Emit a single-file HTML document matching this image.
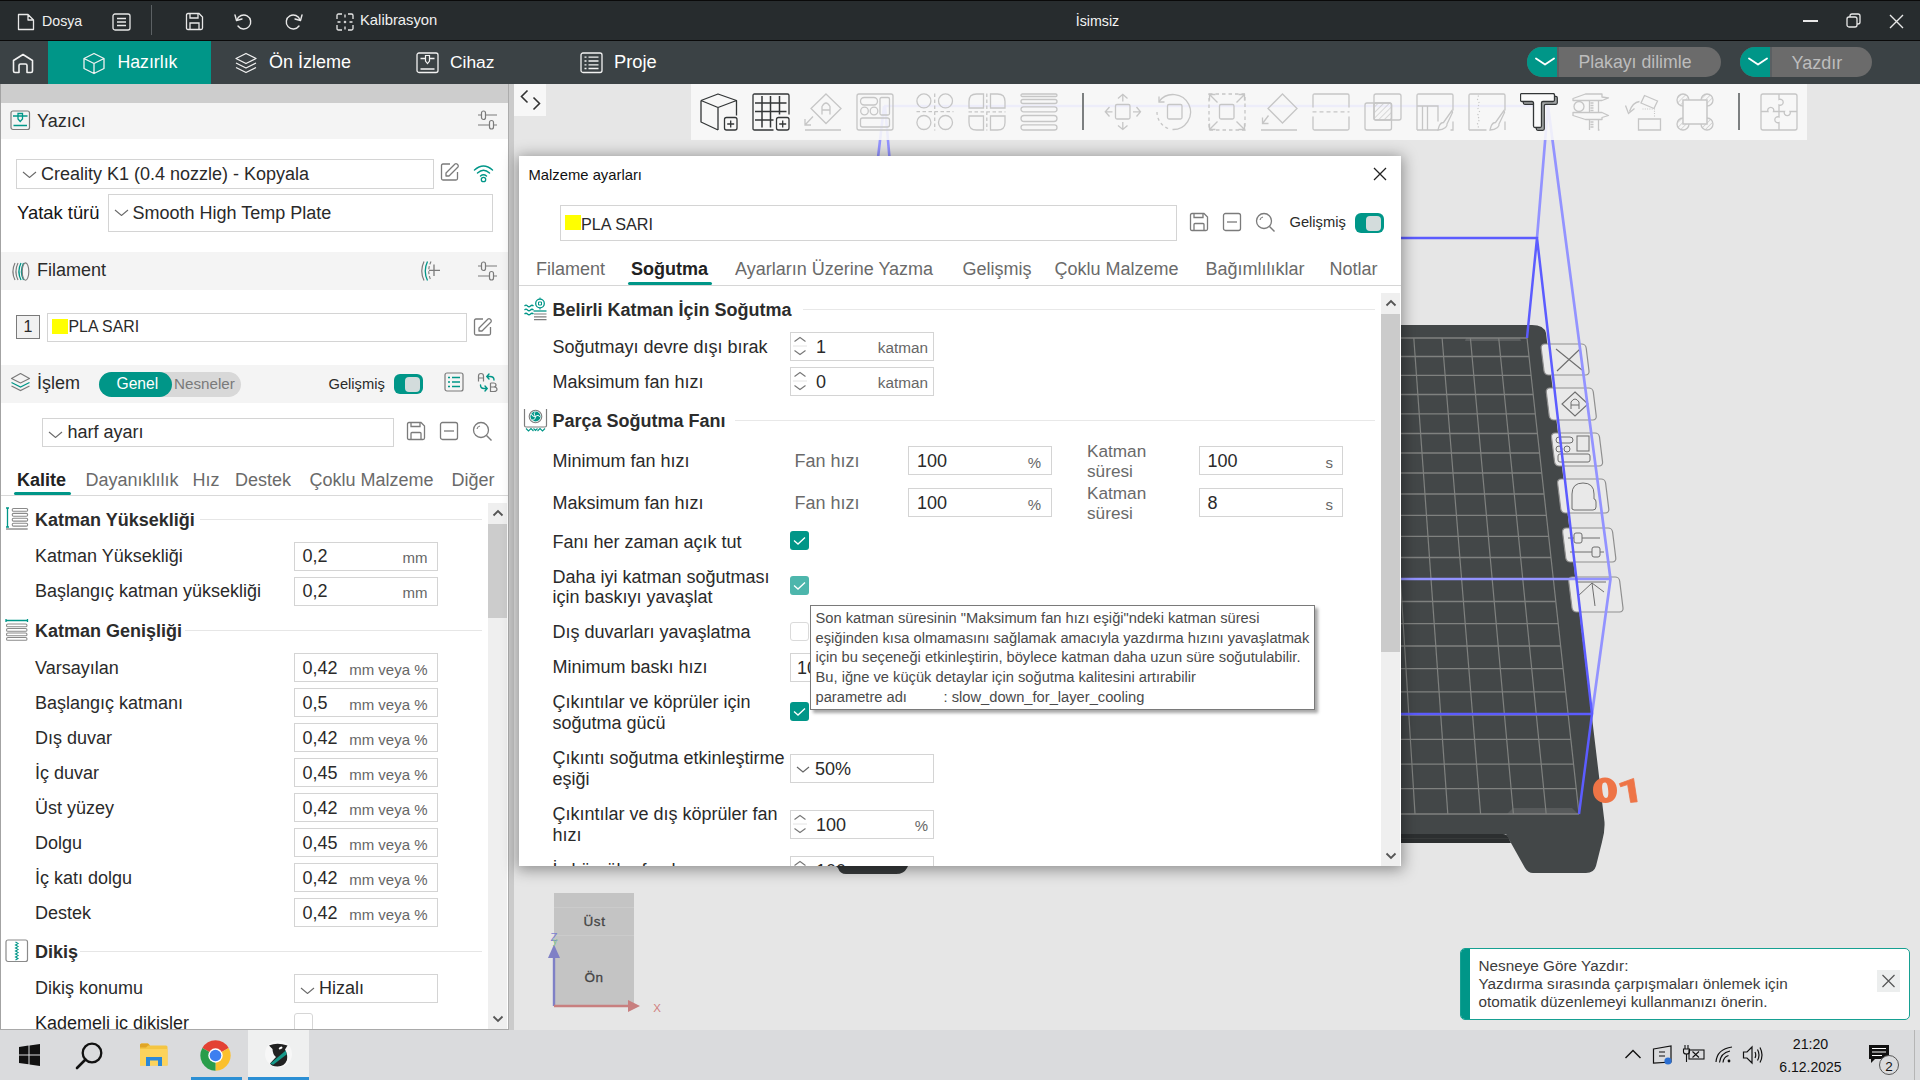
<!DOCTYPE html>
<html><head><meta charset="utf-8"><title>Creality Print</title>
<style>
html,body{margin:0;padding:0;width:1920px;height:1080px;overflow:hidden;background:#e6e6e6;font-family:"Liberation Sans", sans-serif;}
body>div,body>svg{position:absolute;}
.t{position:absolute;line-height:1;white-space:pre;}
</style></head><body>
<div style="left:514px;top:84px;width:1406px;height:946px;background:#e6e6e6;"></div>
<svg style="left:0px;top:0px;" width="1920" height="1080" viewBox="0 0 1920 1080" fill="none"><path d="M1100 325 H1532 Q1544 325 1546 333 L1604.5 822 Q1605 832 1602 842 L1596 866 Q1594 873 1586 873 H1533 Q1528 873 1525 868 L1506 834 H1100 Z" fill="#434748"/><path d="M1100 834 H1503 Q1507 834 1508 837 L1511 843 H1100 Z" fill="#2c2f30"/><path d="M1100 838.5 H1509" stroke="#3a3d3e" stroke-width="0.8"/><path d="M1507 814 L1513 808 H1572 L1578 814 Z" fill="#575a5b"/><path d="M1466 338 H1520 L1521 341 H1465 Z" fill="#5a5d5e"/><path d="M1100 338 H1527.0" stroke="#7f817f" stroke-width="1.3"/><path d="M1100 356.5 H1529.0" stroke="#7f817f" stroke-width="1.3"/><path d="M1100 375.3 H1531.1" stroke="#7f817f" stroke-width="1.3"/><path d="M1100 394.5 H1533.2" stroke="#7f817f" stroke-width="1.3"/><path d="M1100 413.8 H1535.3" stroke="#7f817f" stroke-width="1.3"/><path d="M1100 433.5 H1537.4" stroke="#7f817f" stroke-width="1.3"/><path d="M1100 453 H1539.6" stroke="#7f817f" stroke-width="1.3"/><path d="M1100 473 H1541.7" stroke="#7f817f" stroke-width="1.3"/><path d="M1100 494 H1544.0" stroke="#7f817f" stroke-width="1.3"/><path d="M1100 515.4 H1546.4" stroke="#7f817f" stroke-width="1.3"/><path d="M1100 536.3 H1548.7" stroke="#7f817f" stroke-width="1.3"/><path d="M1100 557.5 H1551.0" stroke="#7f817f" stroke-width="1.3"/><path d="M1100 579.3 H1553.4" stroke="#7f817f" stroke-width="1.3"/><path d="M1100 601.5 H1555.8" stroke="#7f817f" stroke-width="1.3"/><path d="M1100 623.7 H1558.2" stroke="#7f817f" stroke-width="1.3"/><path d="M1100 646 H1560.6" stroke="#7f817f" stroke-width="1.3"/><path d="M1100 668.7 H1563.1" stroke="#7f817f" stroke-width="1.3"/><path d="M1100 691.8 H1565.7" stroke="#7f817f" stroke-width="1.3"/><path d="M1100 715 H1568.2" stroke="#7f817f" stroke-width="1.3"/><path d="M1100 739.3 H1570.8" stroke="#7f817f" stroke-width="1.3"/><path d="M1100 764.1 H1573.5" stroke="#7f817f" stroke-width="1.3"/><path d="M1100 788.7 H1576.2" stroke="#7f817f" stroke-width="1.3"/><path d="M1100 814 H1579.0" stroke="#7f817f" stroke-width="1.3"/><path d="M1527.0 338 L1579.0 814" stroke="#7f817f" stroke-width="1.2"/><path d="M1498.7 338 L1546.2 814" stroke="#7f817f" stroke-width="1.2"/><path d="M1470.4 338 L1513.4 814" stroke="#7f817f" stroke-width="1.2"/><path d="M1442.1 338 L1480.6 814" stroke="#7f817f" stroke-width="1.2"/><path d="M1413.8 338 L1447.8 814" stroke="#7f817f" stroke-width="1.2"/><path d="M1385.5 338 L1415.0 814" stroke="#7f817f" stroke-width="1.2"/><path d="M1357.2 338 L1382.2 814" stroke="#7f817f" stroke-width="1.2"/><g transform="translate(1537,344) skewX(7)" ><rect x="3.7" y="0" width="45" height="31" rx="4" fill="#e9e9e9" stroke="#8f8f8f" stroke-width="1.2"/></g><g transform="translate(1542,388) skewX(7)" ><rect x="3.8" y="0" width="47" height="32" rx="4" fill="#e9e9e9" stroke="#8f8f8f" stroke-width="1.2"/></g><g transform="translate(1547,433) skewX(7)" ><rect x="4.0" y="0" width="48" height="33" rx="4" fill="#e9e9e9" stroke="#8f8f8f" stroke-width="1.2"/></g><g transform="translate(1553,479) skewX(7)" ><rect x="4.1" y="0" width="48" height="34" rx="4" fill="#e9e9e9" stroke="#8f8f8f" stroke-width="1.2"/></g><g transform="translate(1558,528) skewX(7)" ><rect x="4.1" y="0" width="50" height="34" rx="4" fill="#e9e9e9" stroke="#8f8f8f" stroke-width="1.2"/></g><g transform="translate(1564,577) skewX(7)" ><rect x="4.2" y="0" width="51" height="35" rx="4" fill="#e9e9e9" stroke="#8f8f8f" stroke-width="1.2"/></g><path d="M1556 349 L1582 370 M1580 349 L1557 371" stroke="#6e6e6e" stroke-width="1.1"/><path d="M1575 392 L1588 404 L1575 416 L1562 404 Z" stroke="#6e6e6e" stroke-width="1.1" fill="none"/><path d="M1571 409 V402 Q1575 396 1579 402 V409 M1571 405 H1579" stroke="#6e6e6e" stroke-width="1"/><rect x="1556" y="437" width="17" height="6" rx="3" stroke="#6e6e6e" stroke-width="1" fill="none"/><circle cx="1559" cy="449" r="3" stroke="#6e6e6e" stroke-width="1" fill="none"/><circle cx="1567" cy="449" r="3" stroke="#6e6e6e" stroke-width="1" fill="none"/><rect x="1577" y="436" width="12" height="15" stroke="#6e6e6e" stroke-width="1" fill="none"/><rect x="1558" y="454" width="32" height="8" rx="2" stroke="#6e6e6e" stroke-width="1" fill="none"/><path d="M1572 509 V494 Q1572 483 1583 483 Q1594 483 1594 494 V499 Q1596 499 1596 502 V507 Q1596 510 1593 510 H1574 Z" stroke="#6e6e6e" stroke-width="1" fill="none"/><path d="M1568 538 H1600 M1570 552 H1604" stroke="#6e6e6e" stroke-width="1"/><rect x="1574" y="533" width="8" height="10" rx="2" fill="#e9e9e9" stroke="#6e6e6e" stroke-width="1"/><rect x="1592" y="547" width="8" height="10" rx="2" fill="#e9e9e9" stroke="#6e6e6e" stroke-width="1"/><path d="M1577 582 H1606 M1592 583 L1595 606 M1578 596 L1592 583 L1604 592" stroke="#6e6e6e" stroke-width="1" fill="none"/><path fill-rule="evenodd" fill="#ee7446" d="M1604.8 777.6 C1612 777.4 1617 783 1617 790.5 C1617 798 1612.5 802.9 1605.5 802.9 C1598 802.9 1593 797.5 1593 790 C1593 782.5 1598 777.8 1604.8 777.6 Z M1604.6 782.6 C1602.3 782.8 1601.8 785 1602.3 790 C1602.8 795.5 1604 797.9 1606 797.9 C1608 797.9 1608.6 795.5 1608.2 790.5 C1607.7 785 1606.8 782.4 1604.6 782.6 Z"/><path fill="#ee7446" stroke="#ee7446" stroke-width="0.8" stroke-linejoin="round" d="M1619.4 783.6 L1633.6 778.4 L1637.2 801.8 L1630.6 802.4 L1627.6 784.6 L1620.6 786.8 Z"/><path d="M1548 106 L1610.5 579 L1592 714 M1100 579 H1610.5 M1548 106 L1537 238" stroke="#9393ff" stroke-width="2.7" fill="none"/><path d="M1537 238 L1527 338 M1100 238 H1537 L1592 714 L1579 814 M1100 714 H1592" stroke="#5c5cff" stroke-width="2.5" fill="none"/><path d="M884 106 H1548 M884 106 L876 175 M885 106 L891 175" stroke="#9393ff" stroke-width="2.6" fill="none"/><path d="M830 860 H911 L907 868 Q904 874 896 874 H846 Q840 874 838 868 Z" fill="#383b3c"/></svg>
<div style="left:0px;top:0px;width:1920px;height:40px;background:#272c2e;"></div>
<div style="left:0px;top:0px;width:1920px;height:1px;background:#0a0a0a;"></div>
<div style="left:0px;top:40px;width:1920px;height:1px;background:#0a0a0a;"></div>
<svg style="left:17px;top:13px;" width="18" height="18" viewBox="0 0 18 18" fill="none"><path d="M1.5 1.5 H11 L16.5 7 V16.5 H1.5 Z M11 1.5 V7 H16.5" stroke="#e8e8e8" stroke-width="1.3" stroke-linejoin="round"/></svg>
<svg style="left:112px;top:13px;" width="19" height="18" viewBox="0 0 19 18" fill="none"><rect x="1" y="1" width="17" height="16" rx="2" stroke="#e8e8e8" stroke-width="1.3"/><path d="M5 5.5H14M5 9H14M5 12.5H14" stroke="#e8e8e8" stroke-width="1.3"/></svg>
<div style="left:151px;top:5px;width:1px;height:30px;background:#5c6164;"></div>
<svg style="left:185px;top:12px;" width="19" height="19" viewBox="0 0 19 19" fill="none"><path d="M1.5 3 Q1.5 1.5 3 1.5 H14 L17.5 5 V16 Q17.5 17.5 16 17.5 H3 Q1.5 17.5 1.5 16 Z" stroke="#e8e8e8" stroke-width="1.3"/><path d="M5 1.5 V6 H13 V1.5 M5 17.5 V11 H14 V17.5" stroke="#e8e8e8" stroke-width="1.3"/></svg>
<svg style="left:233px;top:12px;" width="20" height="19" viewBox="0 0 20 19" fill="none"><path d="M4 8 A7 7 0 1 1 5 14" stroke="#e8e8e8" stroke-width="1.4" stroke-linecap="round"/><path d="M2 3 L3.5 8.5 L9 7" stroke="#e8e8e8" stroke-width="1.4" stroke-linecap="round" stroke-linejoin="round"/></svg>
<svg style="left:284px;top:12px;" width="20" height="19" viewBox="0 0 20 19" fill="none"><path d="M16 8 A7 7 0 1 0 15 14" stroke="#e8e8e8" stroke-width="1.4" stroke-linecap="round"/><path d="M18 3 L16.5 8.5 L11 7" stroke="#e8e8e8" stroke-width="1.4" stroke-linecap="round" stroke-linejoin="round"/></svg>
<svg style="left:336px;top:12.5px;" width="19" height="19" viewBox="0 0 19 19" fill="none"><path d="M1 6 V2.5 Q1 1 2.5 1 H6 M12 1 H15.5 Q17 1 17 2.5 V6 M17 12 V15.5 Q17 17 15.5 17 H12 M6 17 H2.5 Q1 17 1 15.5 V12" stroke="#e8e8e8" stroke-width="1.3"/><path d="M9 1.5 V4.5 M9 13.5 V16.5 M1.5 9 H4.5 M13.5 9 H16.5" stroke="#e8e8e8" stroke-width="1.3"/><path d="M9 7.5 L10.5 9 L9 10.5 L7.5 9 Z" fill="#e8e8e8"/></svg>
<div style="left:1803px;top:20px;width:15px;height:1.5px;background:#e8e8e8;"></div>
<svg style="left:1846px;top:13px;" width="15" height="15" viewBox="0 0 15 15" fill="none"><rect x="1" y="4" width="10" height="10" rx="2" stroke="#e8e8e8" stroke-width="1.3"/><path d="M4 4 V3 Q4 1 6 1 H12 Q14 1 14 3 V9 Q14 11 12 11 H11" stroke="#e8e8e8" stroke-width="1.3"/></svg>
<svg style="left:1889px;top:14px;" width="15" height="15" viewBox="0 0 15 15" fill="none"><path d="M1 1 L14 14 M14 1 L1 14" stroke="#e8e8e8" stroke-width="1.4"/></svg>
<div class="t" style="top:13.98px;font-size:14.2px;color:#f0f0f0;left:42px;">Dosya</div>
<div class="t" style="top:13.47px;font-size:14.8px;color:#f0f0f0;left:360px;">Kalibrasyon</div>
<div class="t" style="top:13.98px;font-size:14.2px;color:#f4f4f4;left:1097.5px;transform:translateX(-50%);">İsimsiz</div>
<div style="left:0px;top:41px;width:1920px;height:43px;background:#3b4245;"></div>
<div style="left:48px;top:41px;width:163px;height:43px;background:#009688;"></div>
<svg style="left:11px;top:51px;" width="24" height="24" viewBox="0 0 24 24" fill="none"><path d="M2.5 9.5 L12 3.5 L21.5 9.5 V20 Q21.5 21.5 20 21.5 H16 V14.5 Q16 13 14.5 13 H9.5 Q8 13 8 14.5 V21.5 H4 Q2.5 21.5 2.5 20 Z" stroke="#f2f2f2" stroke-width="1.6" stroke-linejoin="round"/></svg>
<svg style="left:82px;top:52px;" width="24" height="23" viewBox="0 0 24 23" fill="none"><path d="M12 1.5 L22 6.5 V16.5 L12 21.5 L2 16.5 V6.5 Z M2 6.5 L12 11.5 L22 6.5 M12 11.5 V21.5" stroke="#f2f2f2" stroke-width="1.3" stroke-linejoin="round"/></svg>
<svg style="left:234px;top:52px;" width="24" height="23" viewBox="0 0 24 23" fill="none"><path d="M12 1.5 L22 6.5 L12 11.5 L2 6.5 Z" stroke="#f2f2f2" stroke-width="1.3" stroke-linejoin="round"/><path d="M2 11 L12 16 L22 11 M2 15.5 L12 20.5 L22 15.5" stroke="#f2f2f2" stroke-width="1.3" stroke-linejoin="round"/></svg>
<svg style="left:415.5px;top:52px;" width="23" height="22" viewBox="0 0 23 22" fill="none"><rect x="1" y="1" width="21" height="19.5" rx="2" stroke="#f2f2f2" stroke-width="1.3"/><path d="M4.5 6.5 H18.5 M4.5 17 H18.5" stroke="#f2f2f2" stroke-width="1.3"/><path d="M9.5 3.5 H13.5 V9 L11.5 11.5 L9.5 9 Z" stroke="#f2f2f2" stroke-width="1.2" fill="#3b4245"/></svg>
<svg style="left:579.5px;top:52px;" width="23" height="22" viewBox="0 0 23 22" fill="none"><rect x="1" y="1" width="21" height="19.5" rx="2" stroke="#f2f2f2" stroke-width="1.3"/><path d="M4.5 5.2 H6.5 M4.5 9 H6.5 M4.5 12.8 H6.5 M4.5 16.5 H6.5 M8.5 5.2 H18.5 M8.5 9 H18.5 M8.5 12.8 H18.5 M8.5 16.5 H18.5" stroke="#f2f2f2" stroke-width="1.3"/></svg>
<div class="t" style="top:53.62px;font-size:17.7px;color:#ffffff;left:117.5px;">Hazırlık</div>
<div class="t" style="top:53.36px;font-size:18px;color:#ffffff;left:269px;">Ön İzleme</div>
<div class="t" style="top:53.87px;font-size:17.4px;color:#ffffff;left:450px;">Cihaz</div>
<div class="t" style="top:53.11px;font-size:18.3px;color:#ffffff;left:614px;">Proje</div>
<div style="left:1527px;top:47px;width:194px;height:30px;border-radius:15px;background:#6b6b6b;overflow:hidden"><div style="position:absolute;left:0;top:0;width:30px;height:30px;background:#009688"></div></div>
<div style="left:1740px;top:47px;width:132px;height:30px;border-radius:15px;background:#6b6b6b;overflow:hidden"><div style="position:absolute;left:0;top:0;width:30px;height:30px;background:#009688"></div></div>
<div style="left:1557px;top:47px;width:2px;height:30px;background:#5a5f62;"></div>
<div style="left:1770px;top:47px;width:2px;height:30px;background:#5a5f62;"></div>
<svg style="left:1534px;top:56px;" width="22" height="12" viewBox="0 0 22 12" fill="none"><path d="M2 2.5 L11 8.5 L20 2.5" stroke="#ffffff" stroke-width="1.9" stroke-linecap="round" stroke-linejoin="round"/></svg>
<svg style="left:1747px;top:56px;" width="22" height="12" viewBox="0 0 22 12" fill="none"><path d="M2 2.5 L11 8.5 L20 2.5" stroke="#ffffff" stroke-width="1.9" stroke-linecap="round" stroke-linejoin="round"/></svg>
<div class="t" style="top:54.02px;font-size:17.7px;color:#bdbdbd;left:1578.5px;">Plakayı dilimle</div>
<div class="t" style="top:53.76px;font-size:18px;color:#bdbdbd;left:1791.5px;">Yazdır</div>
<div style="left:0px;top:84px;width:508px;height:946px;background:#ffffff;"></div>
<div style="left:0px;top:84px;width:508px;height:19px;background:#cdcdcd;"></div>
<div style="left:1px;top:103px;width:507px;height:36px;background:#f4f4f4;"></div>
<div style="left:1px;top:252px;width:507px;height:38px;background:#f4f4f4;"></div>
<div style="left:1px;top:365px;width:507px;height:38px;background:#f4f4f4;"></div>
<div style="left:0px;top:84px;width:1px;height:946px;background:#a3a3a3;"></div>
<div style="left:508px;top:84px;width:6px;height:946px;background:#cbcbcb;"></div>
<div style="left:508px;top:84px;width:1px;height:946px;background:#acacac;"></div>
<svg style="left:10px;top:110px;" width="21" height="21" viewBox="0 0 21 21" fill="none"><rect x="1" y="1" width="18.5" height="18.5" rx="2" stroke="#7b7b7b" stroke-width="1.2"/><path d="M3 6 H17.5 M3.5 15.5 H17" stroke="#009688" stroke-width="1.4"/><path d="M8 3.5 H12.5 V9 L10.2 11.5 L8 9 Z" stroke="#009688" stroke-width="1.3" fill="none"/></svg>
<svg style="left:477px;top:110px;" width="21" height="21" viewBox="0 0 21 21" fill="none"><path d="M1 5 H20 M1 15 H20" stroke="#7b7b7b" stroke-width="1.2"/><rect x="4.5" y="1" width="4" height="8.5" rx="2" fill="#f4f4f4" stroke="#7b7b7b" stroke-width="1.2"/><rect x="12.5" y="10.5" width="4" height="8.5" rx="2" fill="#f4f4f4" stroke="#7b7b7b" stroke-width="1.2"/></svg>
<svg style="left:477px;top:261px;" width="21" height="21" viewBox="0 0 21 21" fill="none"><path d="M1 5 H20 M1 15 H20" stroke="#7b7b7b" stroke-width="1.2"/><rect x="4.5" y="1" width="4" height="8.5" rx="2" fill="#f4f4f4" stroke="#7b7b7b" stroke-width="1.2"/><rect x="12.5" y="10.5" width="4" height="8.5" rx="2" fill="#f4f4f4" stroke="#7b7b7b" stroke-width="1.2"/></svg>
<svg style="left:440px;top:162px;" width="20" height="20" viewBox="0 0 20 20" fill="none"><path d="M10 2 H3 Q1.5 2 1.5 3.5 V16.5 Q1.5 18 3 18 H16 Q17.5 18 17.5 16.5 V10" stroke="#7b7b7b" stroke-width="1.3"/><path d="M6 14 V11 L15 2 Q16 1.3 17 2 L18 3 Q18.7 4 18 5 L9 14 Z" stroke="#7b7b7b" stroke-width="1.3" stroke-linejoin="round"/></svg>
<svg style="left:473px;top:317px;" width="20" height="20" viewBox="0 0 20 20" fill="none"><path d="M10 2 H3 Q1.5 2 1.5 3.5 V16.5 Q1.5 18 3 18 H16 Q17.5 18 17.5 16.5 V10" stroke="#7b7b7b" stroke-width="1.3"/><path d="M6 14 V11 L15 2 Q16 1.3 17 2 L18 3 Q18.7 4 18 5 L9 14 Z" stroke="#7b7b7b" stroke-width="1.3" stroke-linejoin="round"/></svg>
<svg style="left:473px;top:163px;" width="21" height="20" viewBox="0 0 21 20" fill="none"><path d="M1.5 7 Q10.5 -1 19.5 7 M4.5 10 Q10.5 4.5 16.5 10 M7.5 13 Q10.5 10.5 13.5 13" stroke="#009688" stroke-width="1.4" stroke-linecap="round"/><circle cx="10.5" cy="16.5" r="2.2" stroke="#009688" stroke-width="1.3"/></svg>
<svg style="left:10px;top:261px;" width="21" height="21" viewBox="0 0 21 21" fill="none"><path d="M5 2 Q0.8 10.5 5 19 M8 2 Q3.8 10.5 8 19" stroke="#7b7b7b" stroke-width="1.15"/><path d="M11 2 Q6.8 10.5 11 19" stroke="#009688" stroke-width="1.3"/><path d="M13.5 2 Q9.3 10.5 13.5 19" stroke="#009688" stroke-width="1.2"/><ellipse cx="15.5" cy="10.5" rx="3.3" ry="8.7" stroke="#7b7b7b" stroke-width="1.15"/></svg>
<svg style="left:419px;top:260px;" width="23" height="22" viewBox="0 0 23 22" fill="none"><path d="M5 1.5 Q0.5 11 5 20.5" stroke="#7b7b7b" stroke-width="1.2"/><path d="M8.5 1.5 Q4 11 8.5 20.5" stroke="#009688" stroke-width="1.3"/><path d="M12 1.5 Q7.5 11 12 20.5" stroke="#7b7b7b" stroke-width="1.1" stroke-dasharray="3 2"/><path d="M10 10.3 H21 M15 4.5 V16" stroke="#7b7b7b" stroke-width="1.3"/></svg>
<svg style="left:10px;top:372px;" width="21" height="20" viewBox="0 0 21 20" fill="none"><path d="M10.5 1.5 L19.5 6.5 L10.5 11 L1.5 6.5 Z" stroke="#7b7b7b" stroke-width="1.2" stroke-linejoin="round"/><path d="M1.5 10.5 L10.5 15 L19.5 10.5" stroke="#009688" stroke-width="1.3"/><path d="M1.5 14 L10.5 18.5 L19.5 14" stroke="#7b7b7b" stroke-width="1.2"/></svg>
<svg style="left:444px;top:372px;" width="20" height="20" viewBox="0 0 20 20" fill="none"><rect x="1" y="1" width="18" height="18" rx="2" stroke="#7b7b7b" stroke-width="1.2"/><path d="M4 5.5 H6 M4 10 H6 M4 14.5 H6" stroke="#009688" stroke-width="1.3"/><path d="M8 5.5 H16 M8 10 H16 M8 14.5 H16" stroke="#009688" stroke-width="1.3"/></svg>
<svg style="left:477px;top:372px;" width="21" height="21" viewBox="0 0 21 21" fill="none"><path d="M1.5 9.5 V4 Q1.5 1.5 4 1.5 Q6.5 1.5 6.5 4 V9.5 M1.5 6 H6.5" stroke="#7b7b7b" stroke-width="1.2"/><path d="M13.5 11 V19.5 H17 Q20 19.5 20 17.3 Q20 15 17 15 H13.5 M13.5 15 H16.5 Q19 15 19 13 Q19 11 16.5 11 H13.5" stroke="#7b7b7b" stroke-width="1.2"/><path d="M17 8 Q17 4.5 13 4.5 H10 M12 2 L9.8 4.5 L12 7" stroke="#009688" stroke-width="1.4" stroke-linecap="round"/><path d="M3.5 13 Q3.5 16.5 7 16.5 H10 M8 14 L10.2 16.5 L8 19" stroke="#009688" stroke-width="1.4" stroke-linecap="round"/></svg>
<svg style="left:406px;top:421px;" width="20" height="20" viewBox="0 0 20 20" fill="none"><path d="M1.5 3 Q1.5 1.5 3 1.5 H15 L18.5 5 V17 Q18.5 18.5 17 18.5 H3 Q1.5 18.5 1.5 17 Z" stroke="#7b7b7b" stroke-width="1.3"/><path d="M5 1.5 V5.5 H14 V1.5 M5 18.5 V12.5 Q5 11.5 6 11.5 H14 Q15 11.5 15 12.5 V18.5" stroke="#7b7b7b" stroke-width="1.3"/></svg>
<svg style="left:439px;top:421px;" width="20" height="20" viewBox="0 0 20 20" fill="none"><rect x="1.5" y="1.5" width="17" height="17" rx="2" stroke="#7b7b7b" stroke-width="1.3"/><path d="M5 10 H15" stroke="#7b7b7b" stroke-width="1.3"/></svg>
<svg style="left:472px;top:421px;" width="21" height="21" viewBox="0 0 21 21" fill="none"><circle cx="9" cy="9" r="7.5" stroke="#7b7b7b" stroke-width="1.3"/><path d="M14.5 14.5 L19.5 19.5" stroke="#7b7b7b" stroke-width="1.4"/><path d="M5 8 Q5.5 5.5 8 5" stroke="#7b7b7b" stroke-width="1.1"/></svg>
<div class="t" style="top:111.96px;font-size:18px;color:#2a2a2a;left:37px;">Yazıcı</div>
<div style="left:16px;top:159px;width:418px;height:30px;border:1px solid #d4d4d4;background:#fff;box-sizing:border-box;"></div>
<svg style="left:22px;top:170.5px;" width="15" height="7.5" viewBox="0 0 15 7.5" fill="none"><path d="M1 1 L7.5 6.5 L14 1" stroke="#6a6a6a" stroke-width="1.1"/></svg>
<div class="t" style="top:164.56px;font-size:18px;color:#2a2a2a;left:41px;">Creality K1 (0.4 nozzle) - Kopyala</div>
<div class="t" style="top:203.72px;font-size:18.4px;color:#151515;left:17px;">Yatak türü</div>
<div style="left:108px;top:194px;width:385px;height:38px;border:1px solid #d4d4d4;background:#fff;box-sizing:border-box;"></div>
<svg style="left:114px;top:208.5px;" width="15" height="7.5" viewBox="0 0 15 7.5" fill="none"><path d="M1 1 L7.5 6.5 L14 1" stroke="#6a6a6a" stroke-width="1.1"/></svg>
<div class="t" style="top:203.76px;font-size:18px;color:#2a2a2a;left:132.5px;">Smooth High Temp Plate</div>
<div class="t" style="top:261.46px;font-size:18px;color:#2a2a2a;left:37px;">Filament</div>
<div style="left:16px;top:315px;width:24px;height:24px;border:1px solid #7a7a7a;background:#f1f1f1;box-sizing:border-box;"></div>
<div class="t" style="top:318.96px;font-size:16px;color:#2a2a2a;left:28px;transform:translateX(-50%);">1</div>
<div style="left:47px;top:313px;width:420px;height:29px;border:1px solid #d4d4d4;background:#fff;box-sizing:border-box;"></div>
<div style="left:52px;top:319px;width:16px;height:15px;background:#ffff00;"></div>
<div class="t" style="top:319.14px;font-size:15.9px;color:#2a2a2a;left:68.5px;">PLA SARI</div>
<div class="t" style="top:374.36px;font-size:18px;color:#2a2a2a;left:37px;">İşlem</div>
<div style="left:99px;top:372px;width:142px;height:25px;border-radius:12.5px;background:#d8d8d8"></div>
<div style="left:99px;top:372px;width:73px;height:25px;border-radius:12.5px;background:#009688"></div>
<div class="t" style="top:376.09px;font-size:15.6px;color:#ffffff;left:116.5px;">Genel</div>
<div class="t" style="top:376.43px;font-size:15.2px;color:#7a7a7a;left:174px;">Nesneler</div>
<div class="t" style="top:377.06px;font-size:14.7px;color:#2a2a2a;left:328.5px;">Gelişmiş</div>
<div style="left:394px;top:374px;width:29px;height:20px;border-radius:6px;background:#009688"></div>
<div style="left:405px;top:376.5px;width:15px;height:15px;border-radius:4px;background:#d3dcdc"></div>
<div style="left:42px;top:418px;width:352px;height:29px;border:1px solid #d4d4d4;background:#fff;box-sizing:border-box;"></div>
<svg style="left:48px;top:430.5px;" width="15" height="7.5" viewBox="0 0 15 7.5" fill="none"><path d="M1 1 L7.5 6.5 L14 1" stroke="#6a6a6a" stroke-width="1.1"/></svg>
<div class="t" style="top:423.26px;font-size:18px;color:#2a2a2a;left:67.5px;">harf ayarı</div>
<div class="t" style="top:470.76px;font-size:18px;color:#222;font-weight:700;left:17px;">Kalite</div>
<div class="t" style="top:470.76px;font-size:18px;color:#6a6a6a;left:85.5px;">Dayanıklılık</div>
<div class="t" style="top:470.76px;font-size:18px;color:#6a6a6a;left:192.5px;">Hız</div>
<div class="t" style="top:470.76px;font-size:18px;color:#6a6a6a;left:235px;">Destek</div>
<div class="t" style="top:470.76px;font-size:18px;color:#6a6a6a;left:309.5px;">Çoklu Malzeme</div>
<div class="t" style="top:470.76px;font-size:18px;color:#6a6a6a;left:451.5px;">Diğer</div>
<div style="left:14px;top:492px;width:57px;height:3px;border-radius:2px;background:#009688"></div>
<div style="left:1px;top:495px;width:507px;height:1px;background:#d9d9d9;"></div>
<div style="left:488px;top:503px;width:19px;height:527px;background:#efefef;"></div>
<div style="left:488px;top:524px;width:19px;height:94px;background:#cccccc;"></div>
<svg style="left:492px;top:509px;" width="12" height="8" viewBox="0 0 12 8" fill="none"><path d="M1.5 6.5 L6 2 L10.5 6.5" stroke="#555" stroke-width="1.8"/></svg>
<svg style="left:492px;top:1015px;" width="12" height="8" viewBox="0 0 12 8" fill="none"><path d="M1.5 1.5 L6 6 L10.5 1.5" stroke="#555" stroke-width="1.8"/></svg>
<div class="t" style="top:510.76px;font-size:18px;color:#2c2c2c;font-weight:700;left:35px;">Katman Yüksekliği</div>
<div style="left:200px;top:519px;width:282px;height:1px;background:#e6e6e6;"></div>
<div class="t" style="top:547.46px;font-size:18px;color:#2a2a2a;left:35px;">Katman Yüksekliği</div>
<div style="left:294px;top:542px;width:144px;height:29px;border:1px solid #d4d4d4;background:#fff;box-sizing:border-box;"></div>
<div class="t" style="top:547.46px;font-size:18px;color:#2a2a2a;left:302.5px;">0,2</div>
<div class="t" style="top:550.00px;font-size:15px;color:#666;right:1492.5px;">mm</div>
<div class="t" style="top:582.46px;font-size:18px;color:#2a2a2a;left:35px;">Başlangıç katman yüksekliği</div>
<div style="left:294px;top:577px;width:144px;height:29px;border:1px solid #d4d4d4;background:#fff;box-sizing:border-box;"></div>
<div class="t" style="top:582.46px;font-size:18px;color:#2a2a2a;left:302.5px;">0,2</div>
<div class="t" style="top:585.00px;font-size:15px;color:#666;right:1492.5px;">mm</div>
<div class="t" style="top:621.86px;font-size:18px;color:#2c2c2c;font-weight:700;left:35px;">Katman Genişliği</div>
<div style="left:185px;top:630.1px;width:297px;height:1px;background:#e6e6e6;"></div>
<div class="t" style="top:658.96px;font-size:18px;color:#2a2a2a;left:35px;">Varsayılan</div>
<div style="left:294px;top:653px;width:144px;height:29px;border:1px solid #d4d4d4;background:#fff;box-sizing:border-box;"></div>
<div class="t" style="top:658.96px;font-size:18px;color:#2a2a2a;left:302.5px;">0,42</div>
<div class="t" style="top:661.50px;font-size:15px;color:#666;right:1492.5px;">mm veya %</div>
<div class="t" style="top:693.96px;font-size:18px;color:#2a2a2a;left:35px;">Başlangıç katmanı</div>
<div style="left:294px;top:688px;width:144px;height:29px;border:1px solid #d4d4d4;background:#fff;box-sizing:border-box;"></div>
<div class="t" style="top:693.96px;font-size:18px;color:#2a2a2a;left:302.5px;">0,5</div>
<div class="t" style="top:696.50px;font-size:15px;color:#666;right:1492.5px;">mm veya %</div>
<div class="t" style="top:728.96px;font-size:18px;color:#2a2a2a;left:35px;">Dış duvar</div>
<div style="left:294px;top:723px;width:144px;height:29px;border:1px solid #d4d4d4;background:#fff;box-sizing:border-box;"></div>
<div class="t" style="top:728.96px;font-size:18px;color:#2a2a2a;left:302.5px;">0,42</div>
<div class="t" style="top:731.50px;font-size:15px;color:#666;right:1492.5px;">mm veya %</div>
<div class="t" style="top:763.96px;font-size:18px;color:#2a2a2a;left:35px;">İç duvar</div>
<div style="left:294px;top:758px;width:144px;height:29px;border:1px solid #d4d4d4;background:#fff;box-sizing:border-box;"></div>
<div class="t" style="top:763.96px;font-size:18px;color:#2a2a2a;left:302.5px;">0,45</div>
<div class="t" style="top:766.50px;font-size:15px;color:#666;right:1492.5px;">mm veya %</div>
<div class="t" style="top:798.96px;font-size:18px;color:#2a2a2a;left:35px;">Üst yüzey</div>
<div style="left:294px;top:793px;width:144px;height:29px;border:1px solid #d4d4d4;background:#fff;box-sizing:border-box;"></div>
<div class="t" style="top:798.96px;font-size:18px;color:#2a2a2a;left:302.5px;">0,42</div>
<div class="t" style="top:801.50px;font-size:15px;color:#666;right:1492.5px;">mm veya %</div>
<div class="t" style="top:833.96px;font-size:18px;color:#2a2a2a;left:35px;">Dolgu</div>
<div style="left:294px;top:828px;width:144px;height:29px;border:1px solid #d4d4d4;background:#fff;box-sizing:border-box;"></div>
<div class="t" style="top:833.96px;font-size:18px;color:#2a2a2a;left:302.5px;">0,45</div>
<div class="t" style="top:836.50px;font-size:15px;color:#666;right:1492.5px;">mm veya %</div>
<div class="t" style="top:868.96px;font-size:18px;color:#2a2a2a;left:35px;">İç katı dolgu</div>
<div style="left:294px;top:863px;width:144px;height:29px;border:1px solid #d4d4d4;background:#fff;box-sizing:border-box;"></div>
<div class="t" style="top:868.96px;font-size:18px;color:#2a2a2a;left:302.5px;">0,42</div>
<div class="t" style="top:871.50px;font-size:15px;color:#666;right:1492.5px;">mm veya %</div>
<div class="t" style="top:903.96px;font-size:18px;color:#2a2a2a;left:35px;">Destek</div>
<div style="left:294px;top:898px;width:144px;height:29px;border:1px solid #d4d4d4;background:#fff;box-sizing:border-box;"></div>
<div class="t" style="top:903.96px;font-size:18px;color:#2a2a2a;left:302.5px;">0,42</div>
<div class="t" style="top:906.50px;font-size:15px;color:#666;right:1492.5px;">mm veya %</div>
<div class="t" style="top:942.76px;font-size:18px;color:#2c2c2c;font-weight:700;left:35px;">Dikiş</div>
<div style="left:80px;top:951px;width:402px;height:1px;background:#e6e6e6;"></div>
<div class="t" style="top:979.36px;font-size:18px;color:#2a2a2a;left:35px;">Dikiş konumu</div>
<div style="left:294px;top:974px;width:144px;height:29px;border:1px solid #d4d4d4;background:#fff;box-sizing:border-box;"></div>
<svg style="left:300px;top:986.5px;" width="15" height="7.5" viewBox="0 0 15 7.5" fill="none"><path d="M1 1 L7.5 6.5 L14 1" stroke="#6a6a6a" stroke-width="1.1"/></svg>
<div class="t" style="top:979.36px;font-size:18px;color:#2a2a2a;left:319px;">Hizalı</div>
<div style="left:0;top:1003px;width:488px;height:27px;overflow:hidden;position:absolute"><div class="t" style="left:35px;top:11.4px;font-size:18px;color:#1e1e1e">Kademeli iç dikişler</div><div style="position:absolute;left:294px;top:10px;width:19px;height:19px;border:1px solid #d6d6d6;border-radius:3px;box-sizing:border-box"></div></div>
<svg style="left:5px;top:507px;" width="24" height="24" viewBox="0 0 24 24" fill="none"><rect x="7.2" y="1.5" width="15.5" height="2.8" rx="1.4" stroke="#8a8a8a" stroke-width="1.1"/><rect x="7.2" y="6.4" width="15.5" height="2.8" rx="1.4" stroke="#8a8a8a" stroke-width="1.1"/><rect x="7.2" y="11.3" width="15.5" height="2.8" rx="1.4" stroke="#8a8a8a" stroke-width="1.1"/><rect x="7.2" y="16.3" width="15.5" height="2.8" rx="1.4" stroke="#8a8a8a" stroke-width="1.1"/><path d="M1 22 H22.7" stroke="#8a8a8a" stroke-width="1.4"/><path d="M2.5 1 V20 M1 1 H4 M1 20 H4" stroke="#009688" stroke-width="1.3"/></svg>
<svg style="left:5px;top:619px;" width="24" height="23" viewBox="0 0 24 23" fill="none"><path d="M1 1.5 H22.5 M1 0 V3 M22.5 0 V3" stroke="#009688" stroke-width="1.3"/><rect x="1.5" y="5" width="20.5" height="2.8" rx="1.4" stroke="#8a8a8a" stroke-width="1.1"/><rect x="1.5" y="9.5" width="20.5" height="2.8" rx="1.4" stroke="#8a8a8a" stroke-width="1.1"/><rect x="1.5" y="14" width="20.5" height="2.8" rx="1.4" stroke="#8a8a8a" stroke-width="1.1"/><rect x="1.5" y="18.5" width="20.5" height="2.8" rx="1.4" stroke="#8a8a8a" stroke-width="1.1"/></svg>
<svg style="left:5px;top:939px;" width="24" height="24" viewBox="0 0 24 24" fill="none"><rect x="1" y="1" width="21.5" height="21.5" rx="2" stroke="#8a8a8a" stroke-width="1.2"/><path d="M10.5 3 L13 4.5 L10.5 6 L13 7.5 L10.5 9 L13 10.5 L10.5 12 L13 13.5 L10.5 15 L13 16.5 L10.5 18 L13 19.5 L10.5 21" stroke="#009688" stroke-width="1.1"/></svg>
<div style="left:514px;top:84px;width:32px;height:32px;background:#f7f7f7;"></div>
<svg style="left:520px;top:89px;" width="21" height="22" viewBox="0 0 21 22" fill="none"><path d="M7.5 1.5 L1.5 7.5 L7.5 13.5 M13.5 8.5 L19.5 14.5 L13.5 20.5" stroke="#333" stroke-width="1.6"/></svg>
<div style="left:691px;top:84px;width:1116px;height:56px;background:rgba(249,249,249,0.88)"></div>
<svg style="left:700px;top:93px;" width="38" height="38" viewBox="-0.5 -0.5 38 38" fill="none"><path d="M0.5 7 L17.5 0.5 L36 7 V22 M0.5 7 V28.5 L17.5 36.5 M0.5 7 L17.5 14 L36 7 M17.5 14 V36.5" stroke="#333637" stroke-width="1.3" stroke-linejoin="round"/><rect x="24" y="24" width="12.5" height="12.5" rx="2" fill="#f8f8f8" stroke="#333637" stroke-width="1.3"/><path d="M30.2 27 V34 M26.7 30.5 H33.7" stroke="#333637" stroke-width="1.3"/></svg>
<svg style="left:752px;top:93px;" width="38" height="38" viewBox="-0.5 -0.5 38 38" fill="none"><path d="M21 36.5 H2 Q0.5 36.5 0.5 35 V2 Q0.5 0.5 2 0.5 H35 Q36.5 0.5 36.5 2 V21" stroke="#333637" stroke-width="1.3"/><path d="M2.5 9.5 H34 M2.5 18 H34 M2.5 26.5 H21 M9.5 2.5 V34 M18 2.5 V34 M27 2.5 V21" stroke="#333637" stroke-width="1.5"/><rect x="24" y="24" width="12.5" height="12.5" rx="2" fill="#f8f8f8" stroke="#333637" stroke-width="1.3"/><path d="M30.2 27 V34 M26.7 30.5 H33.7" stroke="#333637" stroke-width="1.3"/></svg>
<svg style="left:804px;top:93px;" width="38" height="38" viewBox="-0.5 -0.5 38 38" fill="none"><path d="M21.5 0.5 L36.5 15 L21.5 30 L6.5 15 Z" stroke="#c6c6c6" stroke-width="1.3"/><path d="M17.5 21 V13 Q21.5 6 25.5 13 V21 M17.5 16.5 H25.5" stroke="#c6c6c6" stroke-width="1.3"/><path d="M8.5 23 L0.5 31.5 M0.5 25.5 V31.5 H6.5" stroke="#c6c6c6" stroke-width="1.3"/><path d="M0.5 36.5 H36.5" stroke="#c6c6c6" stroke-width="1.3"/></svg>
<svg style="left:856px;top:93px;" width="38" height="38" viewBox="-0.5 -0.5 38 38" fill="none"><rect x="0.5" y="0.5" width="36" height="36" rx="2" stroke="#c6c6c6" stroke-width="1.3"/><rect x="4" y="4" width="17" height="7.5" rx="3.7" stroke="#c6c6c6" stroke-width="1.3"/><circle cx="8" cy="17.5" r="3.8" stroke="#c6c6c6" stroke-width="1.3"/><circle cx="17.5" cy="17.5" r="3.8" stroke="#c6c6c6" stroke-width="1.3"/><rect x="23.5" y="4" width="9.5" height="17.5" rx="1.5" stroke="#c6c6c6" stroke-width="1.3"/><rect x="4" y="24.5" width="29" height="9" rx="2" stroke="#c6c6c6" stroke-width="1.3"/></svg>
<svg style="left:916px;top:93px;" width="38" height="38" viewBox="-0.5 -0.5 38 38" fill="none"><circle cx="7.4" cy="7.4" r="7" stroke="#c6c6c6" stroke-width="1.3"/><circle cx="29" cy="7.4" r="7" stroke="#c6c6c6" stroke-width="1.3"/><circle cx="7.4" cy="29" r="7" stroke="#c6c6c6" stroke-width="1.3"/><circle cx="29" cy="29" r="7" stroke="#c6c6c6" stroke-width="1.3"/><path d="M18.2 0 V37 M0 18.2 H37" stroke="#c6c6c6" stroke-width="1.3" stroke-dasharray="3.5 2.5"/></svg>
<svg style="left:968px;top:93px;" width="38" height="38" viewBox="-0.5 -0.5 38 38" fill="none"><g><path d="M15 0.5 H8 Q0.5 0.5 0.5 8 V14.5 H15 Z" stroke="#c6c6c6" stroke-width="1.3"/></g><g transform="translate(37 0) scale(-1 1)"><path d="M15 0.5 H8 Q0.5 0.5 0.5 8 V14.5 H15 Z" stroke="#c6c6c6" stroke-width="1.3"/></g><g transform="translate(0 37) scale(1 -1)"><path d="M15 0.5 H8 Q0.5 0.5 0.5 8 V14.5 H15 Z" stroke="#c6c6c6" stroke-width="1.3"/></g><g transform="translate(37 37) scale(-1 -1)"><path d="M15 0.5 H8 Q0.5 0.5 0.5 8 V14.5 H15 Z" stroke="#c6c6c6" stroke-width="1.3"/></g><path d="M18.3 0 V37 M0 18.3 H37" stroke="#c6c6c6" stroke-width="1.3" stroke-dasharray="3.5 2.5"/></svg>
<svg style="left:1020px;top:93px;" width="38" height="38" viewBox="-0.5 -0.5 38 38" fill="none"><rect x="0.5" y="0.5" width="36" height="2.5" rx="1.25" stroke="#c6c6c6" stroke-width="1.3"/><rect x="0.5" y="6" width="36" height="4" rx="2.0" stroke="#c6c6c6" stroke-width="1.3"/><rect x="0.5" y="13.3" width="36" height="5" rx="2.5" stroke="#c6c6c6" stroke-width="1.3"/><rect x="0.5" y="22" width="36" height="6" rx="3.0" stroke="#c6c6c6" stroke-width="1.3"/><rect x="0.5" y="31.3" width="36" height="5.2" rx="2.6" stroke="#c6c6c6" stroke-width="1.3"/></svg>
<div style="left:1082px;top:93px;width:1.5px;height:37px;background:#7c7f80;"></div>
<svg style="left:1104px;top:93px;" width="38" height="38" viewBox="-0.5 -0.5 38 38" fill="none"><rect x="11" y="11" width="14.5" height="14.5" rx="1.5" stroke="#c6c6c6" stroke-width="1.3"/><path d="M18.3 0.8 V8 M13.5 5 L18.3 0.8 L23 5 M18.3 28.5 V36 M13.5 32 L18.3 36 L23 32 M0.8 18.3 H8 M5 13.5 L0.8 18.3 L5 23 M28.5 18.3 H36 M32 13.5 L36 18.3 L32 23" stroke="#c6c6c6" stroke-width="1.3"/></svg>
<svg style="left:1156px;top:93px;" width="38" height="38" viewBox="-0.5 -0.5 38 38" fill="none"><rect x="11" y="11" width="14.5" height="14.5" rx="1.5" stroke="#c6c6c6" stroke-width="1.3"/><path d="M2.5 8 A17.5 17.5 0 1 1 16 36" stroke="#c6c6c6" stroke-width="1.3"/><path d="M0.5 18.5 A17.5 17.5 0 0 0 13 35.5" stroke="#c6c6c6" stroke-width="1.3" stroke-dasharray="3 3"/><path d="M2.5 3 V8.5 H8" stroke="#c6c6c6" stroke-width="1.3"/></svg>
<svg style="left:1208px;top:93px;" width="38" height="38" viewBox="-0.5 -0.5 38 38" fill="none"><rect x="0.5" y="0.5" width="36" height="36" stroke="#c6c6c6" stroke-width="1.3" stroke-dasharray="3.5 3"/><rect x="11" y="11" width="14.5" height="14.5" rx="1.5" stroke="#c6c6c6" stroke-width="1.3"/><path d="M1 1 L9 9 M36 1 L28 9 M1 36 L9 28 M36 36 L28 28 M1 7 V1 H7 M30 1 H36 V7 M1 30 V36 H7 M30 36 H36 V30" stroke="#c6c6c6" stroke-width="1.3"/></svg>
<svg style="left:1260px;top:93px;" width="38" height="38" viewBox="-0.5 -0.5 38 38" fill="none"><path d="M22 0.5 L36.5 15 L22 29.5 L7.5 15 Z" stroke="#c6c6c6" stroke-width="1.3"/><path d="M8 22 L2 30 M2 24 V30 H8" stroke="#c6c6c6" stroke-width="1.3"/><path d="M0.5 36.5 H36.5" stroke="#c6c6c6" stroke-width="1.3"/></svg>
<svg style="left:1312px;top:93px;" width="38" height="38" viewBox="-0.5 -0.5 38 38" fill="none"><path d="M0.5 14 V2 Q0.5 0.5 2 0.5 H35 Q36.5 0.5 36.5 2 V14 M0.5 23 V35 Q0.5 36.5 2 36.5 H35 Q36.5 36.5 36.5 35 V23" stroke="#c6c6c6" stroke-width="1.3"/><path d="M0 18.3 H37" stroke="#c6c6c6" stroke-width="1.3" stroke-dasharray="4 3"/></svg>
<svg style="left:1364px;top:93px;" width="38" height="38" viewBox="-0.5 -0.5 38 38" fill="none"><defs><pattern id="hatch" width="4" height="4" patternUnits="userSpaceOnUse" patternTransform="rotate(45)"><path d="M0 0 V4" stroke="#c6c6c6" stroke-width="1.3"/></pattern></defs><rect x="9.5" y="0.5" width="27" height="26" rx="2" stroke="#c6c6c6" stroke-width="1.3"/><rect x="0.5" y="9.5" width="26.5" height="27" rx="2" stroke="#c6c6c6" stroke-width="1.3"/><rect x="9.5" y="9.5" width="17.5" height="17" rx="2" fill="url(#hatch)" stroke="#c6c6c6" stroke-width="1.5"/></svg>
<svg style="left:1416px;top:93px;" width="38" height="38" viewBox="-0.5 -0.5 38 38" fill="none"><path d="M0.5 36.5 V2 Q0.5 0.5 2 0.5 H35 Q36.5 0.5 36.5 2 V17 M36.5 28 V36.5 H34 M22 36.5 H0.5" stroke="#c6c6c6" stroke-width="1.3"/><path d="M0.5 12.5 H21.5 V28 M6 12.5 V36.5 M11 12.5 V36.5" stroke="#c6c6c6" stroke-width="1.3"/><path d="M35.5 17 L27 29 Q24 29 22.5 33 L21.5 36.5 Q26 36.5 29 34 Q31 32 30.5 30.5 L36 19 Z" stroke="#c6c6c6" stroke-width="1.3"/></svg>
<svg style="left:1468px;top:93px;" width="38" height="38" viewBox="-0.5 -0.5 38 38" fill="none"><path d="M0.5 36.5 V2 Q0.5 0.5 2 0.5 H35 Q36.5 0.5 36.5 2 V17 M36.5 28 V36.5 M18 36.5 H0.5" stroke="#c6c6c6" stroke-width="1.3"/><path d="M10 2 L9 6 L11 10 L9 14 L11 18 L9 22 L11 26 L9 30 L10 34" stroke="#c6c6c6" stroke-width="1.2" stroke-dasharray="1.2 2.2"/><path d="M35.5 17 L27 29 Q24 29 22.5 33 L21.5 36.5 Q26 36.5 29 34 Q31 32 30.5 30.5 L36 19 Z" stroke="#c6c6c6" stroke-width="1.3"/></svg>
<svg style="left:1520px;top:93px;" width="38" height="38" viewBox="-0.5 -0.5 38 38" fill="none"><path d="M4.3 2.8 H35.3 Q36.8 2.8 36.8 4.3 V9.3 Q36.8 10.8 35.3 10.8 H25.3 Q23.8 10.8 23.8 12.3 V35.3 Q23.8 36.8 22.3 36.8 H17.3 Q15.8 36.8 15.8 35.3 V12.3 Q15.8 10.8 14.3 10.8 H4.3 Q2.8 10.8 2.8 9.3 V4.3 Q2.8 2.8 4.3 2.8 Z" fill="#a3a6a6" stroke="#333637" stroke-width="1.2"/><path d="M1.5 0 H32.5 Q34 0 34 1.5 V6.5 Q34 8 32.5 8 H22.5 Q21 8 21 9.5 V32.5 Q21 34 19.5 34 H14.5 Q13 34 13 32.5 V9.5 Q13 8 11.5 8 H1.5 Q0 8 0 6.5 V1.5 Q0 0 1.5 0 Z" fill="#fafafa" stroke="#333637" stroke-width="1.3"/></svg>
<svg style="left:1572px;top:93px;" width="38" height="38" viewBox="-0.5 -0.5 38 38" fill="none"><path d="M0.5 5 L13 0.5 H29.5 V3.5 L36 4.5 L29.5 7 H0.5 Z M0.5 19 H29.5 L36 22 L29.5 24 V26 H13 L0.5 22 Z" stroke="#c6c6c6" stroke-width="1.3" stroke-linejoin="round"/><circle cx="6.5" cy="13" r="5" stroke="#c6c6c6" stroke-width="1.3"/><path d="M17 7 V19 M26 7 V19 M17 26 V36.5 M26 26 V36.5 H27 M18 9.5 H21 M18 12 H21 M18 14.5 H21 M18 17 H21 M18 28.5 H21 M18 31 H21 M18 33.5 H21" stroke="#c6c6c6" stroke-width="1.3"/></svg>
<svg style="left:1624px;top:93px;" width="38" height="38" viewBox="-0.5 -0.5 38 38" fill="none"><path d="M14 36.5 V25.5 H36 V36.5 Z" stroke="#c6c6c6" stroke-width="1.3"/><path d="M20 2 L33 7.5 L29.5 15 L16.5 9.5 Z" stroke="#c6c6c6" stroke-width="1.3"/><path d="M18 15.5 H30 V24" stroke="#c6c6c6" stroke-width="1.1" stroke-dasharray="1 1.3"/><path d="M15 8 Q8 9 5 18 M1 12 L4 20 L10 15" stroke="#c6c6c6" stroke-width="1.3"/></svg>
<svg style="left:1676px;top:93px;" width="38" height="38" viewBox="-0.5 -0.5 38 38" fill="none"><defs><pattern id="h2" width="3.5" height="3.5" patternUnits="userSpaceOnUse" patternTransform="rotate(45)"><path d="M0 0 V3.5" stroke="#c6c6c6" stroke-width="1.2"/></pattern></defs><circle cx="6.5" cy="6.5" r="6" fill="url(#h2)" stroke="#c6c6c6" stroke-width="1.3"/><circle cx="30.5" cy="6.5" r="6" fill="url(#h2)" stroke="#c6c6c6" stroke-width="1.3"/><circle cx="6.5" cy="30.5" r="6" fill="url(#h2)" stroke="#c6c6c6" stroke-width="1.3"/><circle cx="30.5" cy="30.5" r="6" fill="url(#h2)" stroke="#c6c6c6" stroke-width="1.3"/><rect x="6.5" y="6.5" width="24" height="24" fill="#f8f8f8" stroke="#c6c6c6" stroke-width="1.5"/></svg>
<div style="left:1738px;top:93px;width:1.5px;height:37px;background:#7c7f80;"></div>
<svg style="left:1760px;top:93px;" width="38" height="38" viewBox="-0.5 -0.5 38 38" fill="none"><rect x="0.5" y="0.5" width="36" height="36" rx="2" stroke="#c6c6c6" stroke-width="1.3"/><path d="M18.5 0.5 V6 A3 3 0 1 1 18.5 11.5 V18 H13 A3 3 0 1 0 7.5 18 H0.5 M18.5 18 V23.5 A3 3 0 1 0 18.5 29 V36.5 M18.5 18 H24 A3 3 0 1 0 29.5 18 H36.5" stroke="#c6c6c6" stroke-width="1.3"/></svg>
<div style="left:554px;top:893px;width:80px;height:114px;background:#c4c4c4;"></div>
<div style="left:554px;top:907px;width:80px;height:1px;background:#cbcbcb;"></div>
<div style="left:554px;top:935px;width:80px;height:1px;background:#cbcbcb;"></div>
<div class="t" style="top:914.57px;font-size:13.5px;color:#454545;left:594.5px;transform:translateX(-50%);letter-spacing:0.6px;-webkit-text-stroke:0.3px #454545;">Üst</div>
<div class="t" style="top:971.07px;font-size:13.5px;color:#454545;left:594px;transform:translateX(-50%);letter-spacing:0.6px;-webkit-text-stroke:0.3px #454545;">Ön</div>
<svg style="left:546px;top:940px;" width="100" height="72" viewBox="0 0 100 72" fill="none"><path d="M8 66 V12" stroke="#7f80c6" stroke-width="2.4"/><path d="M2 18 L8 4.5 L14 18 Z" fill="#7f80c6"/><path d="M8 66 H86" stroke="#c87f7f" stroke-width="2.4"/><path d="M82 60 L94 66 L82 72 Z" fill="#c87f7f"/></svg>
<div class="t" style="top:1002.77px;font-size:11.5px;color:#d07f7f;left:657px;transform:translateX(-50%);">X</div>
<div class="t" style="top:932.27px;font-size:11.5px;color:#7c7fd0;left:554px;transform:translateX(-50%);">Z</div>
<div class="t" style="top:937.38px;font-size:9px;color:#7fc48a;left:555px;transform:translateX(-50%);">y</div>
<div style="left:519px;top:156px;width:882px;height:710px;background:#fff;box-shadow:0 2px 14px 2px rgba(0,0,0,0.38)"></div>
<div class="t" style="top:167.67px;font-size:14.8px;color:#111;left:528.5px;">Malzeme ayarları</div>
<svg style="left:1373px;top:167px;" width="14" height="14" viewBox="0 0 14 14" fill="none"><path d="M1 1 L13 13 M13 1 L1 13" stroke="#222" stroke-width="1.3"/></svg>
<div style="left:560px;top:205px;width:617px;height:36px;border:1px solid #d4d4d4;background:#fff;box-sizing:border-box;"></div>
<div style="left:565px;top:215px;width:16px;height:15px;background:#ffff00;"></div>
<div class="t" style="top:215.89px;font-size:16.2px;color:#2a2a2a;left:581px;">PLA SARI</div>
<svg style="left:1189px;top:212px;" width="20" height="20" viewBox="0 0 20 20" fill="none"><path d="M1.5 3 Q1.5 1.5 3 1.5 H15 L18.5 5 V17 Q18.5 18.5 17 18.5 H3 Q1.5 18.5 1.5 17 Z" stroke="#7b7b7b" stroke-width="1.3"/><path d="M5 1.5 V5.5 H14 V1.5 M5 18.5 V12.5 Q5 11.5 6 11.5 H14 Q15 11.5 15 12.5 V18.5" stroke="#7b7b7b" stroke-width="1.3"/></svg>
<svg style="left:1222px;top:212px;" width="20" height="20" viewBox="0 0 20 20" fill="none"><rect x="1.5" y="1.5" width="17" height="17" rx="2" stroke="#7b7b7b" stroke-width="1.3"/><path d="M5 10 H15" stroke="#7b7b7b" stroke-width="1.3"/></svg>
<svg style="left:1255px;top:212px;" width="21" height="21" viewBox="0 0 21 21" fill="none"><circle cx="9" cy="9" r="7.5" stroke="#7b7b7b" stroke-width="1.3"/><path d="M14.5 14.5 L19.5 19.5" stroke="#7b7b7b" stroke-width="1.4"/><path d="M5 8 Q5.5 5.5 8 5" stroke="#7b7b7b" stroke-width="1.1"/></svg>
<div class="t" style="top:214.86px;font-size:14.7px;color:#2a2a2a;left:1289.5px;">Gelişmiş</div>
<div style="left:1355px;top:213px;width:29px;height:20px;border-radius:6px;background:#009688"></div>
<div style="left:1366px;top:215.5px;width:15px;height:15px;border-radius:4px;background:#d3dcdc"></div>
<svg style="left:523px;top:297px;" width="25" height="25" viewBox="0 0 25 25" fill="none"><path d="M1.5 9 Q3 7.5 4.5 9 T7.5 9 T10.5 9 M1.5 13 Q3 11.5 4.5 13 T7.5 13 T10.5 13 M1.5 17 Q3 15.5 4.5 17 T7.5 17 T10.5 17" stroke="#009688" stroke-width="1.2"/><circle cx="17" cy="6.5" r="4.3" stroke="#009688" stroke-width="1.3"/><path d="M17 0.5 V2.5 M17 10.5 V12.5 M15.5 5 H18.5 M15.5 8 H18.5 M15.5 5 V8 M18.5 5 V8" stroke="#009688" stroke-width="1"/><path d="M10.5 14 H23.5" stroke="#009688" stroke-width="1.3"/><path d="M11 17 H23.5 M11 19.8 H23.5 M11 22.6 H23.5" stroke="#7d7d7d" stroke-width="1.2"/></svg>
<svg style="left:523px;top:408px;" width="25" height="25" viewBox="0 0 25 25" fill="none"><path d="M1.5 1 V17.5 Q1.5 19 3 19 H22 Q23.5 19 23.5 17.5 V1" stroke="#7d7d7d" stroke-width="1.2"/><circle cx="12.5" cy="8.5" r="6.3" stroke="#7d7d7d" stroke-width="1.1"/><circle cx="12.5" cy="8.5" r="5" fill="#009688"/><path d="M12.5 8.5 Q10 5 12.5 4 M12.5 8.5 Q16 6 16.5 9 M12.5 8.5 Q12 12.5 9 12 M12.5 8.5 Q9 9 8.5 6" stroke="#fff" stroke-width="1"/><path d="M3 20.5 L5.5 23 L8 20.5 L10.5 23 M14.5 23 L17 20.5 L19.5 23 L22 20.5 M10.5 20.5 L12.5 22.5 L14.5 20.5" stroke="#009688" stroke-width="1.1"/></svg>
<div class="t" style="top:260.46px;font-size:18px;color:#6a6a6a;left:536px;">Filament</div>
<div class="t" style="top:260.46px;font-size:18px;color:#222;font-weight:700;left:631px;">Soğutma</div>
<div class="t" style="top:260.46px;font-size:18px;color:#6a6a6a;left:735px;">Ayarların Üzerine Yazma</div>
<div class="t" style="top:260.46px;font-size:18px;color:#6a6a6a;left:962.5px;">Gelişmiş</div>
<div class="t" style="top:260.46px;font-size:18px;color:#6a6a6a;left:1054.5px;">Çoklu Malzeme</div>
<div class="t" style="top:260.46px;font-size:18px;color:#6a6a6a;left:1205.5px;">Bağımlılıklar</div>
<div class="t" style="top:260.46px;font-size:18px;color:#6a6a6a;left:1329.5px;">Notlar</div>
<div style="left:628px;top:282px;width:84px;height:3px;border-radius:2px;background:#009688"></div>
<div style="left:519px;top:285px;width:882px;height:1px;background:#d6d6d6;"></div>
<div style="left:1381px;top:293px;width:19px;height:573px;background:#efefef;"></div>
<div style="left:1381px;top:314px;width:19px;height:338px;background:#cbcbcb;"></div>
<svg style="left:1385px;top:299px;" width="12" height="8" viewBox="0 0 12 8" fill="none"><path d="M1.5 6.5 L6 2 L10.5 6.5" stroke="#555" stroke-width="1.8"/></svg>
<svg style="left:1385px;top:852px;" width="12" height="8" viewBox="0 0 12 8" fill="none"><path d="M1.5 1.5 L6 6 L10.5 1.5" stroke="#555" stroke-width="1.8"/></svg>
<div style="left:519px;top:286px;width:862px;height:580px;overflow:hidden">
<div class="t" style="top:14.96px;font-size:18px;color:#2c2c2c;font-weight:700;left:33.5px;">Belirli Katman İçin Soğutma</div>
<div style="position:absolute;left:284px;top:23px;width:572px;height:1px;background:#e8e8e8"></div>
<div class="t" style="top:51.56px;font-size:18px;color:#2a2a2a;left:33.5px;">Soğutmayı devre dışı bırak</div>
<div style="position:absolute;left:271px;top:46px;width:144px;height:29px;border:1px solid #d4d4d4;background:#fff;box-sizing:border-box;"></div>
<svg style="position:absolute;left:273px;top:49px" width="16" height="22" viewBox="0 0 16 22" fill="none"><path d="M2.5 6.5 L8 2.5 L13.5 6.5 M2.5 15.5 L8 19.5 L13.5 15.5" stroke="#777" stroke-width="1.1"/><path d="M1 11 H15" stroke="#e4e4e4" stroke-width="1"/></svg>
<div class="t" style="top:51.76px;font-size:18px;color:#2a2a2a;left:297px;">1</div>
<div class="t" style="top:53.55px;font-size:15.3px;color:#666;right:453px;">katman</div>
<div class="t" style="top:86.56px;font-size:18px;color:#2a2a2a;left:33.5px;">Maksimum fan hızı</div>
<div style="position:absolute;left:271px;top:81px;width:144px;height:29px;border:1px solid #d4d4d4;background:#fff;box-sizing:border-box;"></div>
<svg style="position:absolute;left:273px;top:84px" width="16" height="22" viewBox="0 0 16 22" fill="none"><path d="M2.5 6.5 L8 2.5 L13.5 6.5 M2.5 15.5 L8 19.5 L13.5 15.5" stroke="#777" stroke-width="1.1"/><path d="M1 11 H15" stroke="#e4e4e4" stroke-width="1"/></svg>
<div class="t" style="top:86.76px;font-size:18px;color:#2a2a2a;left:297px;">0</div>
<div class="t" style="top:88.55px;font-size:15.3px;color:#666;right:453px;">katman</div>
<div class="t" style="top:125.96px;font-size:18px;color:#2c2c2c;font-weight:700;left:33.5px;">Parça Soğutma Fanı</div>
<div style="position:absolute;left:216px;top:134px;width:640px;height:1px;background:#e8e8e8"></div>
<div class="t" style="top:165.96px;font-size:18px;color:#2a2a2a;left:33.5px;">Minimum fan hızı</div>
<div class="t" style="top:165.96px;font-size:18px;color:#6a6a6a;left:275.5px;">Fan hızı</div>
<div style="position:absolute;left:389px;top:160.2px;width:144px;height:29px;border:1px solid #d4d4d4;background:#fff;box-sizing:border-box;"></div>
<div class="t" style="top:165.96px;font-size:18px;color:#2a2a2a;left:398px;">100</div>
<div class="t" style="top:168.50px;font-size:15px;color:#666;right:340px;">%</div>
<div class="t" style="top:156.74px;font-size:17.2px;color:#6a6a6a;left:568px;">Katman</div>
<div class="t" style="top:176.54px;font-size:17.2px;color:#6a6a6a;left:568px;">süresi</div>
<div style="position:absolute;left:680px;top:160.2px;width:144px;height:29px;border:1px solid #d4d4d4;background:#fff;box-sizing:border-box;"></div>
<div class="t" style="top:165.96px;font-size:18px;color:#2a2a2a;left:688.5px;">100</div>
<div class="t" style="top:168.50px;font-size:15px;color:#666;right:48px;">s</div>
<div class="t" style="top:207.96px;font-size:18px;color:#2a2a2a;left:33.5px;">Maksimum fan hızı</div>
<div class="t" style="top:207.96px;font-size:18px;color:#6a6a6a;left:275.5px;">Fan hızı</div>
<div style="position:absolute;left:389px;top:202.2px;width:144px;height:29px;border:1px solid #d4d4d4;background:#fff;box-sizing:border-box;"></div>
<div class="t" style="top:207.96px;font-size:18px;color:#2a2a2a;left:398px;">100</div>
<div class="t" style="top:210.50px;font-size:15px;color:#666;right:340px;">%</div>
<div class="t" style="top:198.74px;font-size:17.2px;color:#6a6a6a;left:568px;">Katman</div>
<div class="t" style="top:218.54px;font-size:17.2px;color:#6a6a6a;left:568px;">süresi</div>
<div style="position:absolute;left:680px;top:202.2px;width:144px;height:29px;border:1px solid #d4d4d4;background:#fff;box-sizing:border-box;"></div>
<div class="t" style="top:207.96px;font-size:18px;color:#2a2a2a;left:688.5px;">8</div>
<div class="t" style="top:210.50px;font-size:15px;color:#666;right:48px;">s</div>
<div class="t" style="top:247.06px;font-size:18px;color:#2a2a2a;left:33.5px;">Fanı her zaman açık tut</div>
<div style="position:absolute;left:271px;top:245px;width:19px;height:19px;border-radius:3px;background:#009688"></div>
<svg style="position:absolute;left:271px;top:245px" width="19" height="19" viewBox="0 0 19 19" fill="none"><path d="M4 9.5 L8 13 L15 6.5" stroke="#fff" stroke-width="1.3"/></svg>
<div class="t" style="top:281.76px;font-size:18px;color:#2a2a2a;left:33.5px;">Daha iyi katman soğutması</div>
<div class="t" style="top:302.46px;font-size:18px;color:#2a2a2a;left:33.5px;">için baskıyı yavaşlat</div>
<div style="position:absolute;left:271px;top:290px;width:19px;height:19px;border-radius:3px;background:#4db6ac"></div>
<svg style="position:absolute;left:271px;top:290px" width="19" height="19" viewBox="0 0 19 19" fill="none"><path d="M4 9.5 L8 13 L15 6.5" stroke="#fff" stroke-width="1.3"/></svg>
<div class="t" style="top:337.46px;font-size:18px;color:#2a2a2a;left:33.5px;">Dış duvarları yavaşlatma</div>
<div style="position:absolute;left:271px;top:336px;width:19px;height:19px;border-radius:3px;border:1px solid #dadada;box-sizing:border-box;background:#fff"></div>
<div class="t" style="top:372.46px;font-size:18px;color:#2a2a2a;left:33.5px;">Minimum baskı hızı</div>
<div style="position:absolute;left:271px;top:367px;width:144px;height:29px;border:1px solid #d4d4d4;background:#fff;box-sizing:border-box;"></div>
<div class="t" style="top:372.76px;font-size:18px;color:#2a2a2a;left:278px;">10</div>
<div class="t" style="top:407.46px;font-size:18px;color:#2a2a2a;left:33.5px;">Çıkıntılar ve köprüler için</div>
<div class="t" style="top:427.76px;font-size:18px;color:#2a2a2a;left:33.5px;">soğutma gücü</div>
<div style="position:absolute;left:271px;top:416px;width:19px;height:19px;border-radius:3px;background:#009688"></div>
<svg style="position:absolute;left:271px;top:416px" width="19" height="19" viewBox="0 0 19 19" fill="none"><path d="M4 9.5 L8 13 L15 6.5" stroke="#fff" stroke-width="1.3"/></svg>
<div class="t" style="top:463.36px;font-size:18px;color:#2a2a2a;left:33.5px;">Çıkıntı soğutma etkinleştirme</div>
<div class="t" style="top:483.56px;font-size:18px;color:#2a2a2a;left:33.5px;">eşiği</div>
<div style="position:absolute;left:271px;top:468px;width:144px;height:29px;border:1px solid #d4d4d4;background:#fff;box-sizing:border-box;"></div>
<svg style="position:absolute;left:277px;top:480px" width="14" height="8" viewBox="0 0 14 8" fill="none"><path d="M1 1 L7 6 L13 1" stroke="#666" stroke-width="1.2"/></svg>
<div class="t" style="top:473.96px;font-size:18px;color:#2a2a2a;left:296px;">50%</div>
<div class="t" style="top:518.96px;font-size:18px;color:#2a2a2a;left:33.5px;">Çıkıntılar ve dış köprüler fan</div>
<div class="t" style="top:540.46px;font-size:18px;color:#2a2a2a;left:33.5px;">hızı</div>
<div style="position:absolute;left:271px;top:524px;width:144px;height:29px;border:1px solid #d4d4d4;background:#fff;box-sizing:border-box;"></div>
<svg style="position:absolute;left:273px;top:527px" width="16" height="22" viewBox="0 0 16 22" fill="none"><path d="M2.5 6.5 L8 2.5 L13.5 6.5 M2.5 15.5 L8 19.5 L13.5 15.5" stroke="#777" stroke-width="1.1"/><path d="M1 11 H15" stroke="#e4e4e4" stroke-width="1"/></svg>
<div class="t" style="top:529.76px;font-size:18px;color:#2a2a2a;left:297px;">100</div>
<div class="t" style="top:531.80px;font-size:15px;color:#666;right:453px;">%</div>
<div class="t" style="top:574.96px;font-size:18px;color:#2a2a2a;left:33.5px;">İç köprüler fan hızı</div>
<div style="position:absolute;left:271px;top:570px;width:144px;height:29px;border:1px solid #d4d4d4;background:#fff;box-sizing:border-box;"></div>
<svg style="position:absolute;left:273px;top:573px" width="16" height="22" viewBox="0 0 16 22" fill="none"><path d="M2.5 6.5 L8 2.5 L13.5 6.5 M2.5 15.5 L8 19.5 L13.5 15.5" stroke="#777" stroke-width="1.1"/><path d="M1 11 H15" stroke="#e4e4e4" stroke-width="1"/></svg>
<div class="t" style="top:575.76px;font-size:18px;color:#2a2a2a;left:297px;">100</div>
<div class="t" style="top:577.80px;font-size:15px;color:#666;right:453px;">%</div>
</div>
<div style="left:810px;top:605px;width:505px;height:105px;background:#fff;border:1px solid #7a7a7a;box-sizing:border-box;box-shadow:3px 3px 3px rgba(0,0,0,0.35)"></div>
<div class="t" style="top:610.76px;font-size:14.7px;color:#4a4a4a;left:815.5px;">Son katman süresinin "Maksimum fan hızı eşiği"ndeki katman süresi</div>
<div class="t" style="top:630.61px;font-size:14.7px;color:#4a4a4a;left:815.5px;">eşiğinden kısa olmamasını sağlamak amacıyla yazdırma hızını yavaşlatmak</div>
<div class="t" style="top:650.46px;font-size:14.7px;color:#4a4a4a;left:815.5px;">için bu seçeneği etkinleştirin, böylece katman daha uzun süre soğutulabilir.</div>
<div class="t" style="top:670.31px;font-size:14.7px;color:#4a4a4a;left:815.5px;">Bu, iğne ve küçük detaylar için soğutma kalitesini artırabilir</div>
<div class="t" style="top:690.16px;font-size:14.7px;color:#4a4a4a;left:815.5px;">parametre adı</div>
<div class="t" style="top:690.16px;font-size:14.7px;color:#4a4a4a;left:943.5px;">: slow_down_for_layer_cooling</div>
<div style="left:1460px;top:948px;width:450px;height:72px;background:#fff;border:1px solid #16a092;border-radius:5px;box-sizing:border-box;overflow:hidden"><div style="position:absolute;left:0;top:0;width:9px;height:72px;background:#009688"></div></div>
<div class="t" style="top:958.35px;font-size:15.3px;color:#3c3c3c;left:1478.5px;">Nesneye Göre Yazdır:</div>
<div class="t" style="top:976.35px;font-size:15.3px;color:#3c3c3c;left:1478.5px;">Yazdırma sırasında çarpışmaları önlemek için</div>
<div class="t" style="top:994.35px;font-size:15.3px;color:#3c3c3c;left:1478.5px;">otomatik düzenlemeyi kullanmanızı önerin.</div>
<div style="left:1877px;top:970px;width:23px;height:22px;background:#eceeee;"></div>
<svg style="left:1881px;top:974px;" width="15" height="14" viewBox="0 0 15 14" fill="none"><path d="M1.5 1 L13.5 13 M13.5 1 L1.5 13" stroke="#555" stroke-width="1.2"/></svg>
<div style="left:0px;top:1030px;width:1920px;height:50px;background:#dadbdd;"></div>
<div style="left:0px;top:1029px;width:509px;height:1px;background:#a9a9a9;"></div>
<svg style="left:19px;top:1044px;" width="22" height="22" viewBox="0 0 22 22" fill="none"><path d="M0 3 L9.5 1.6 V10.4 H0 Z M10.5 1.45 L21 0 V10.4 H10.5 Z M0 11.4 H9.5 V20.3 L0 19 Z M10.5 11.4 H21 V21.9 L10.5 20.45 Z" fill="#111"/></svg>
<svg style="left:74px;top:1040px;" width="32" height="32" viewBox="0 0 32 32" fill="none"><circle cx="18" cy="13" r="9.3" stroke="#111" stroke-width="2.3"/><path d="M11.5 19.5 L3 28" stroke="#111" stroke-width="2.6" stroke-linecap="round"/></svg>
<svg style="left:139px;top:1042px;" width="30" height="26" viewBox="0 0 30 26" fill="none"><path d="M1 3 Q1 1.5 2.5 1.5 H9 L11 3.5 H27 Q28.5 3.5 28.5 5 V23.5 H1 Z" fill="#f4c542"/><path d="M1 3 Q1 1.5 2.5 1.5 H9 L11 3.5 H9 L7 5.5 H1 Z" fill="#e0a526"/><path d="M1 7 H28.5 V23.5 H1 Z" fill="#fcd35c"/><path d="M7 24 V15 H23 V24 H19 V18.5 H11 V24 Z" fill="#2b88d8"/></svg>
<svg style="left:0px;top:0px;" width="1920" height="1080" viewBox="0 0 1920 1080" fill="none"><path d="M215.5 1055.5 L202.34 1047.90 A15.2 15.2 0 0 1 228.66 1047.90 Z" fill="#e34234"/><path d="M215.5 1055.5 L228.66 1047.90 A15.2 15.2 0 0 1 215.50 1070.70 Z" fill="#fbc02d"/><path d="M215.5 1055.5 L215.50 1070.70 A15.2 15.2 0 0 1 202.34 1047.90 Z" fill="#2a9d4a"/><circle cx="215.5" cy="1055.5" r="7.2" fill="#fff"/><circle cx="215.5" cy="1055.5" r="5.8" fill="#3d7ff0"/></svg>
<div style="left:191px;top:1077px;width:51px;height:3px;background:#2b8fd4;"></div>
<div style="left:248px;top:1030px;width:61px;height:47px;background:#eff0f0;"></div>
<div style="left:248px;top:1077px;width:61px;height:3px;background:#2b8fd4;"></div>
<svg style="left:0px;top:0px;" width="1920" height="1080" viewBox="0 0 1920 1080" fill="none"><circle cx="278.5" cy="1054" r="13.5" fill="#f7f7f7"/><path d="M269 1045.5 Q277 1042 287.5 1045.5 L285 1049.5 Q288 1055 287 1060 Q284.5 1066.5 277.5 1066.5 Q271.5 1066.5 270 1063.5 L276 1057 Q272.5 1054 272.5 1049 Z" fill="#222"/><path d="M270.2 1063.8 L285.8 1050.6 L286.6 1054.5 L273.2 1064.8 Z" fill="#16998a"/><ellipse cx="280.6" cy="1048" rx="2" ry="1.1" transform="rotate(-25 280.6 1048)" fill="#fff"/></svg>
<svg style="left:1624px;top:1048px;" width="18" height="12" viewBox="0 0 18 12" fill="none"><path d="M1.5 10 L9 2.5 L16.5 10" stroke="#111" stroke-width="1.4"/></svg>
<svg style="left:1652px;top:1044px;" width="24" height="22" viewBox="0 0 24 22" fill="none"><path d="M1.5 5 L19 2 V18 L1.5 19 Z" stroke="#111" stroke-width="1.2"/><path d="M7 8 H13 M7 12 H13" stroke="#111" stroke-width="1.1"/><circle cx="16" cy="17" r="3.6" fill="#2c6fd1"/></svg>
<svg style="left:1682px;top:1044px;" width="24" height="20" viewBox="0 0 24 20" fill="none"><path d="M3 1 V5 M6 1 V5 M1.5 5 H7.5 V8 Q7.5 10 4.5 10 Q1.5 10 1.5 8 Z M4.5 10 V18" stroke="#111" stroke-width="1.1"/><rect x="7" y="6" width="15" height="9" stroke="#111" stroke-width="1.1"/><path d="M10.5 7.5 L17 13.5 M17 7.5 L10.5 13.5" stroke="#111" stroke-width="1.1"/></svg>
<svg style="left:1715px;top:1046px;" width="20" height="18" viewBox="0 0 20 18" fill="none"><path d="M1 16 Q2 3 17 1 M4.5 16.5 Q5.5 7 15 5 M8 16.5 Q8.5 11 13.5 9.5" stroke="#111" stroke-width="1.2"/><circle cx="14" cy="15" r="1.4" fill="#111"/></svg>
<svg style="left:1742px;top:1045px;" width="22" height="20" viewBox="0 0 22 20" fill="none"><path d="M1.5 7 H5 L10 2 V18 L5 13 H1.5 Z" stroke="#111" stroke-width="1.2"/><path d="M13 7 Q14.5 10 13 13 M15.5 4.5 Q18.5 10 15.5 15.5 M18 2.5 Q22 10 18 17.5" stroke="#111" stroke-width="1.2"/></svg>
<div class="t" style="top:1036.98px;font-size:14.2px;color:#111;left:1810.5px;transform:translateX(-50%);">21:20</div>
<div class="t" style="top:1060.15px;font-size:14px;color:#111;left:1810.5px;transform:translateX(-50%);">6.12.2025</div>
<svg style="left:1866px;top:1042px;" width="36" height="36" viewBox="0 0 36 36" fill="none"><path d="M3 3 H23 V17 H9 L5 21 V17 H3 Z" fill="#111"/><path d="M6 6.5 H20 M6 10 H20 M6 13.5 H16" stroke="#fff" stroke-width="1.1"/><circle cx="23" cy="23" r="9.5" fill="#dadbdd" stroke="#555" stroke-width="1"/></svg>
<div class="t" style="top:1059.57px;font-size:13.5px;color:#111;left:1889px;transform:translateX(-50%);">2</div>
<div style="left:1914px;top:1030px;width:1px;height:50px;background:#b5b5b5;"></div>
</body></html>
